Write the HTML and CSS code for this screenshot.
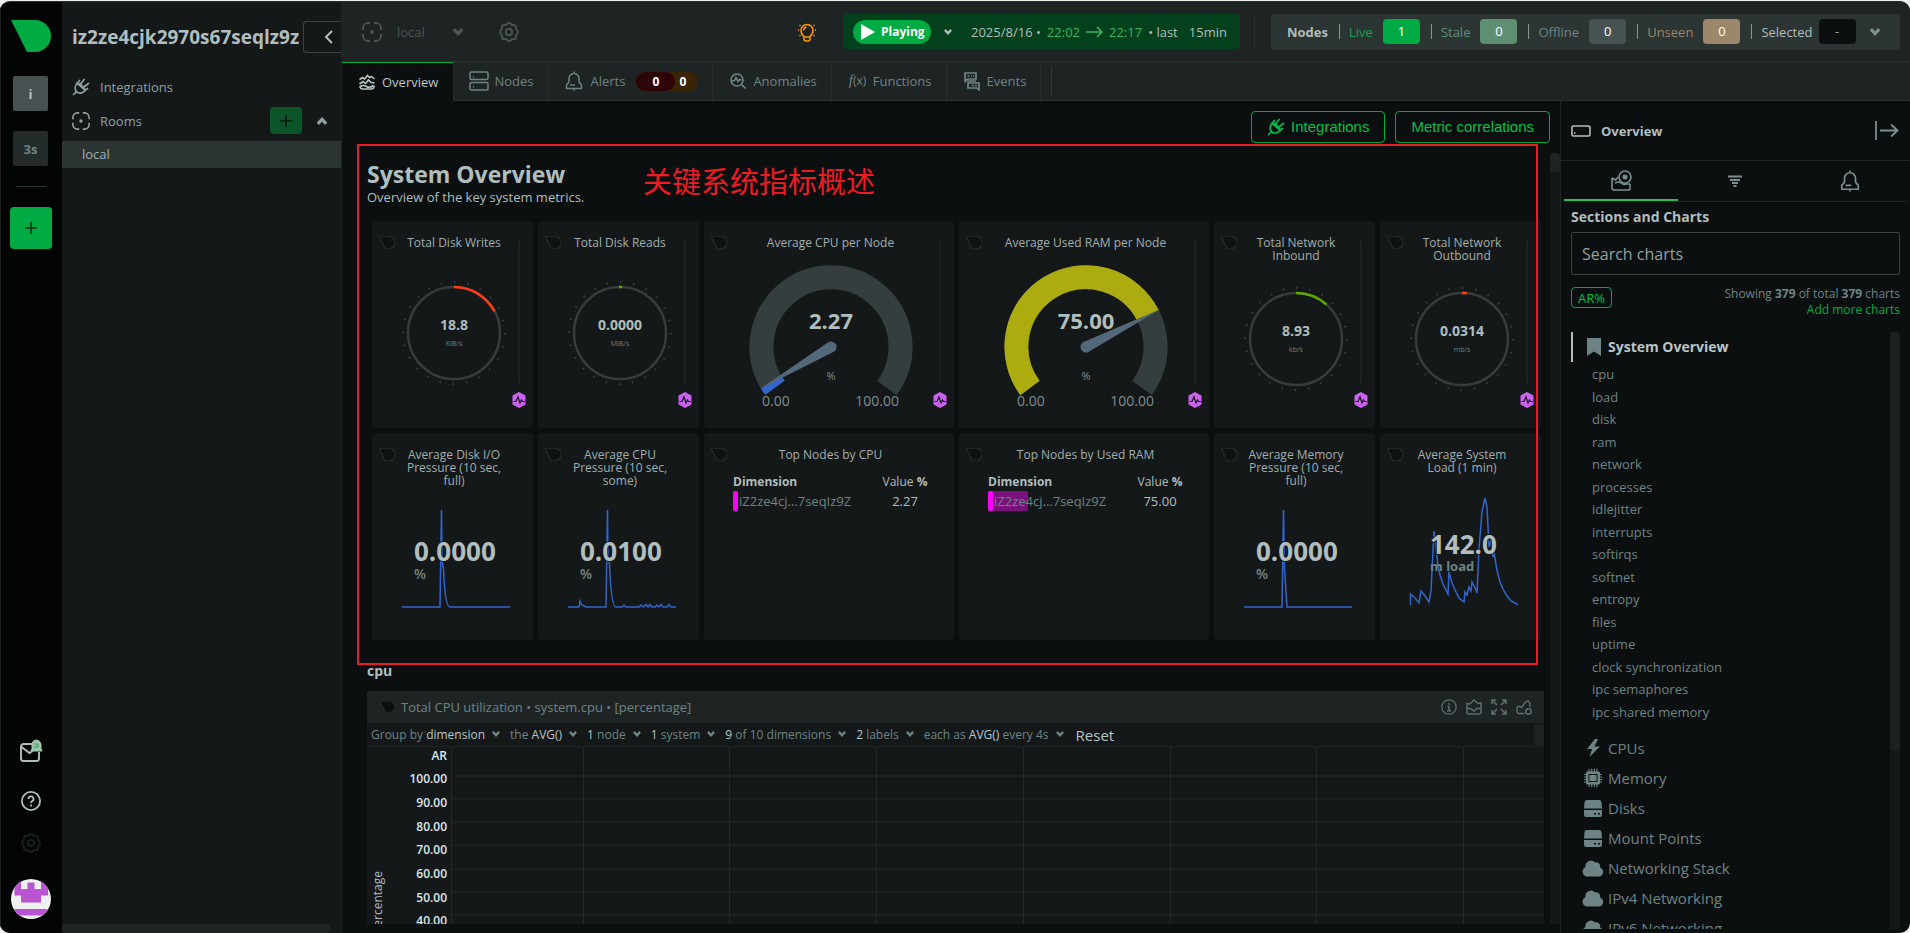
FILE: index.html
```html
<!DOCTYPE html>
<html lang="en">
<head>
<meta charset="utf-8">
<title>Netdata – System Overview</title>
<link rel="stylesheet" href="styles.css">
</head>
<body>
<svg class="sprite" aria-hidden="true">
  <symbol id="logo" viewBox="0 0 40 32"><path d="M0 0H24A16 16 0 0 1 24 32H16Z"/></symbol>
  <symbol id="chev" viewBox="0 0 10 8"><path d="M0 2 2 0 5 3.200 8 0 10 2V2.800L5 8 0 2.800Z"/></symbol>
  <symbol id="room" viewBox="0 0 20 20"><path d="M8 1H6A5 5 0 0 0 1 6v2M12 1h2a5 5 0 0 1 5 5v2M19 12v2a5 5 0 0 1-5 5h-2M8 19H6a5 5 0 0 1-5-5v-2" fill="none" stroke="currentColor" stroke-width="1.800"/><circle cx="10" cy="10" r="1.900"/></symbol>
  <symbol id="gear" viewBox="0 0 20 20"><path d="M10 1c1.600 0 1.900 1.500 3 1.900s2.400-.4 3.500.7.300 2.300.7 3.400S19 8.400 19 10s-1.400 1.900-1.800 3 .4 2.400-.7 3.500-2.400.3-3.500.700S11.600 19 10 19s-1.900-1.400-3-1.800-2.400.4-3.500-.7-.3-2.400-.7-3.500S1 11.600 1 10s1.400-1.900 1.800-3-.4-2.400.7-3.500 2.400-.3 3.500-.700S8.400 1 10 1Z" fill="none" stroke="currentColor" stroke-width="1.800"/><circle cx="10" cy="10" r="3.200" fill="none" stroke="currentColor" stroke-width="1.800"/></symbol>
  <symbol id="plug" viewBox="0 0 18 18"><path d="M1.500 16.500 4.500 13.500M5.500 5C2.500 7.500 2.500 11 4.500 13.500S10.500 15.500 13 12.500M5 5 13.500 12.500M8 5.500 12 10M7.500 2.500 5.500 5M9 5.500l3-4M12.500 8.500 16.500 5.500M13 12l2.500-1.500" fill="none" stroke="currentColor" stroke-width="1.700" stroke-linecap="round"/></symbol>
  <symbol id="bell" viewBox="0 0 18 20"><path d="M9 2.500a5 5 0 0 0-5 5V11L1.500 14v3.500h15V14L14 11V7.500a5 5 0 0 0-5-5ZM9 .500v2M5 14h5M9 17.500v2" fill="none" stroke="currentColor" stroke-width="1.500" stroke-linejoin="round"/></symbol>
  <symbol id="hex" viewBox="0 0 14 16"><path d="M7 0 13.500 3.500v9L7 16 .500 12.500v-9Z" fill="#cb62f0"/><path d="M1.500 9.500H4L6 5l2 6 1.500-3 1 1.500H13" fill="none" stroke="#141819" stroke-width="1.200"/></symbol>
  <symbol id="disk" viewBox="0 0 18 17"><path d="M3 0h12q2 0 2.500 2l.500 6.500H0L.500 2Q1 0 3 0ZM0 10h18v4.500q0 2.500-2 2.500H2q-2 0-2-2.500Zm10 3v1.500h2V13Zm4 0v1.500h2V13Z" fill-rule="evenodd"/></symbol>
  <symbol id="cloud" viewBox="0 0 22 17"><path d="M5 16.500a5 5 0 0 1-1.500-9.500A5.500 5.500 0 0 1 13 2.500a4 4 0 0 1 5 5A4.700 4.700 0 0 1 17.500 16.500Z"/></symbol>
  <symbol id="dial" viewBox="0 0 108 108"><circle cx="54" cy="54" r="51" fill="none" stroke="#3c4646" stroke-width="2" pathLength="240" stroke-dasharray="1 9"/><circle cx="54" cy="54" r="46" fill="none" stroke="#353e3e" stroke-width="2.500"/></symbol>
</svg>

<div class="app">
  <nav class="rail" aria-label="Spaces">
    <svg class="rail-logo"><use href="#logo"/></svg>
    <button class="space space-on">i</button>
    <button class="space">3s</button>
    <hr class="rail-line">
    <button class="add-space" aria-label="Add space"><svg width="12" height="12" viewBox="0 0 12 12"><path d="M6 0v12M0 6h12" stroke="#0a2e17" stroke-width="1.500"/></svg></button>
    <div class="rail-foot">
      <button class="icon-btn" aria-label="News"><svg width="24" height="24" viewBox="0 0 24 24"><path d="M13 5H4.500A2.500 2.500 0 0 0 2 7.500v12A2.500 2.500 0 0 0 4.500 22h13a2.500 2.500 0 0 0 2.500-2.500V13M2.500 8l8 6 3-2" fill="none" stroke="#b0bebe" stroke-width="1.900"/><path d="M17 1a5 5 0 0 1 5 5v3.500l1 2.500H12l1-2.500V6A5 5 0 0 1 17 1Z" fill="#8fcf9c" stroke="#b0bebe"/><path d="M15 5h4v3h-4" fill="none" stroke="#5f8a6c"/></svg></button>
      <button class="icon-btn help" aria-label="Help"><svg width="20" height="20" viewBox="0 0 20 20"><circle cx="10" cy="10" r="9.100" fill="none" stroke="#b0bebe" stroke-width="1.800"/><path d="M7.500 8A2.500 2.500 0 1 1 11 10.200Q10 10.700 10 12M10 13.500v2" fill="none" stroke="#b0bebe" stroke-width="1.800"/></svg></button>
      <button class="icon-btn dim" aria-label="Settings"><svg width="20" height="20"><use href="#gear"/></svg></button>
      <svg class="avatar" viewBox="0 0 40 40" role="img" aria-label="Account"><clipPath id="round"><circle cx="20" cy="20" r="20"/></clipPath><g clip-path="url(#round)"><path d="M0 0h40v40H0Z" fill="#f0f0f0"/><path d="M3.500 0H10v10h6.500V3.500h7V10H30V0h7v16.500h-7v7H10v-7H3.500ZM3.500 30h33v6.500h-33Z" fill="#b955d3"/></g></svg>
    </div>
  </nav>

  <aside class="side">
    <div class="side-head">
      <h2 class="side-title">iz2ze4cjk2970s67seqlz9z</h2>
      <button class="collapse" aria-label="Collapse"><svg width="9" height="14" viewBox="0 0 9 14"><path d="M8 1 2 7l6 6" fill="none" stroke="currentColor" stroke-width="2"/></svg></button>
    </div>
    <a class="side-row" href="#"><svg width="18" height="18"><use href="#plug"/></svg>Integrations</a>
    <div class="side-row rooms"><svg width="18" height="18"><use href="#room"/></svg><span>Rooms</span>
      <button class="add-room" aria-label="Add room"><svg width="12" height="12" viewBox="0 0 12 12"><path d="M6 0v12M0 6h12" stroke="#08170e" stroke-width="1.500"/></svg></button>
      <button class="icon-btn fold" aria-label="Fold"><svg width="10" height="8"><use href="#chev"/></svg></button>
    </div>
    <a class="side-room" href="#">local</a>
    <div class="side-thumb"></div>
  </aside>

  <div class="work">
    <header class="top">
      <div class="crumbs">
        <svg width="20" height="20"><use href="#room"/></svg><span class="crumb-name">local</span>
        <svg width="10" height="8"><use href="#chev"/></svg>
        <svg class="crumb-gear" width="20" height="20"><use href="#gear"/></svg>
      </div>
      <svg class="bulb" viewBox="0 0 20 20"><path d="M7 14.500C4.500 12.500 4 11 4 8.500a6 6 0 0 1 12 0c0 2.500-.5 4-3 6v2.500q0 2-2 2H9q-2 0-2-2ZM7.500 15h5M6.500 8.500q.5-3 3-3.500M1 8h1M18 8h1M2.500 3l1 .8M17.500 3l-1 .8M2.500 14l1-.8M17.500 14l-1-.8" fill="none" stroke="#f90" stroke-width="1.500"/></svg>
      <div class="player">
        <button class="playing"><svg width="14" height="16" viewBox="0 0 14 16"><path d="M0 0 14 8 0 16Z" fill="#fff"/></svg>Playing</button>
        <svg class="play-chev" width="8" height="6"><use href="#chev"/></svg>
        <button class="range">2025/8/16 • <em>22:02</em> <svg width="17" height="12" viewBox="0 0 17 12"><path d="M0 6h16M11 1l5 5-5 5" fill="none" stroke="#37b45f" stroke-width="1.500"/></svg> <em>22:17</em> • last <span class="span-len">15min</span></button>
      </div>
      <div class="top-line"></div>
      <div class="nodes-bar">
        <b>Nodes</b>
        <span class="stat live">Live <i>1</i></span>
        <span class="stat stale">Stale <i>0</i></span>
        <span class="stat offline">Offline <i>0</i></span>
        <span class="stat unseen">Unseen <i>0</i></span>
        <span class="stat selected">Selected <i>-</i></span>
        <svg class="nodes-chev" width="10" height="8"><use href="#chev"/></svg>
      </div>
    </header>

    <nav class="tabs">
      <a class="tab tab-on" href="#"><svg width="16" height="16" viewBox="0 0 16 16"><path d="M.500 5.500 3.500 3.500 5.500 5 8.500 1.500 10.500 3.500 12.500 2.500 15.500 5M.500 10 4 7.500 6.500 9.500 9.500 6 12 8.500 15.500 9M1 12q0 3 2.500 3h9q2.500 0 2.500-3.500M1.500 12.500q3-2 6 0t7-1" fill="none" stroke="currentColor" stroke-width="1.600"/></svg>Overview</a>
      <a class="tab tab-nodes" href="#"><svg width="20" height="20" viewBox="0 0 20 20"><path d="M2.500 1h15q1.500 0 1.500 1.500V7q0 1.500-1.500 1.500h-15Q1 8.500 1 7V2.500Q1 1 2.500 1ZM2.500 11.500h15q1.500 0 1.500 1.500v4.500q0 1.500-1.500 1.500h-15Q1 19 1 17.500V13q0-1.500 1.500-1.500ZM4 6h1M4 16h1" fill="none" stroke="currentColor" stroke-width="1.500"/></svg>Nodes</a>
      <a class="tab" href="#"><svg width="18" height="20"><use href="#bell"/></svg>Alerts<span class="alerts"><b class="crit">0</b><b class="warn">0</b></span></a>
      <a class="tab" href="#"><svg width="16" height="16" viewBox="0 0 16 16"><circle cx="7" cy="7" r="6" fill="none" stroke="currentColor" stroke-width="1.600"/><path d="M11.500 11.500 15.500 15.500M2 8l2.500-.5L6 4.500l2 4 1.500-2L11.500 7" fill="none" stroke="currentColor" stroke-width="1.600"/></svg>Anomalies</a>
      <a class="tab" href="#"><span class="fx"><i>f</i>(x)</span>Functions</a>
      <a class="tab" href="#"><svg width="16" height="19" viewBox="0 0 16 19"><path d="M1 1h11v6H3.500L1 9.500ZM4 11h11v7l-2-2H4Z" fill="none" stroke="currentColor" stroke-width="1.700"/><path d="M3.500 4h2M7 4h1M9 4h1M8 13.500h2M11 13.500h2M3 9h9" stroke="currentColor" stroke-width="1.700"/></svg>Events</a>
      <span class="tabs-line"></span>
    </nav>

    <div class="body">
      <main class="main">
        <div class="actions">
          <button class="outline"><svg width="18" height="18"><use href="#plug"/></svg>Integrations</button>
          <button class="outline">Metric correlations</button>
        </div>
        <div class="scroll">
          <div class="content">
            <h1 class="title">System Overview</h1>
            <p class="subtitle">Overview of the key system metrics.</p>

            <section class="cards">
              <article class="card">
                <svg class="mark"><use href="#logo"/></svg>
                <div class="card-mid"><h3>Total Disk Writes</h3>
                  <svg class="dial" viewBox="0 0 108 108"><use href="#dial"/><path d="M54 8A46 46 0 0 1 94.600 32.400" stroke="#ff3c14" class="arc"/><text x="54" y="51" class="dial-val">18.8</text><text x="54" y="67" class="dial-unit">KiB/s</text></svg></div>
                <div class="card-side"><span></span><svg><use href="#hex"/></svg></div>
              </article>
              <article class="card">
                <svg class="mark"><use href="#logo"/></svg>
                <div class="card-mid"><h3>Total Disk Reads</h3>
                  <svg class="dial" viewBox="0 0 108 108"><use href="#dial"/><path d="M53 8h3" stroke="#5fa800" class="arc"/><text x="54" y="51" class="dial-val">0.0000</text><text x="54" y="67" class="dial-unit">MiB/s</text></svg></div>
                <div class="card-side"><span></span><svg><use href="#hex"/></svg></div>
              </article>
              <article class="card">
                <svg class="mark"><use href="#logo"/></svg>
                <div class="card-mid"><h3>Average CPU per Node</h3>
                  <svg class="gauge" viewBox="0 0 170 150"><path d="M29 123A69.500 69.500 0 1 1 141 123" class="gauge-track"/><path d="M28.800 122.800A69.500 69.500 0 0 1 25.300 117.500" stroke="#3366cc" class="gauge-val"/><path d="M82.200 77.200 13 124.500 87.800 86.800A5.500 5.500 0 0 0 82.200 77.200Z" class="needle"/><text x="85" y="64" class="gauge-num">2.27</text><text x="85" y="115" class="gauge-unit">%</text><text x="16" y="141" class="gauge-min">0.00</text><text x="153" y="141" class="gauge-max">100.00</text></svg></div>
                <div class="card-side"><span></span><svg><use href="#hex"/></svg></div>
              </article>
              <article class="card">
                <svg class="mark"><use href="#logo"/></svg>
                <div class="card-mid"><h3>Average Used RAM per Node</h3>
                  <svg class="gauge" viewBox="0 0 170 150"><path d="M29 123A69.500 69.500 0 1 1 141 123" class="gauge-track"/><path d="M29 123A69.500 69.500 0 1 1 147 50.500" stroke="#acac10" class="gauge-val"/><path d="M82.500 77.100 159 44.300 87.500 86.900A5.500 5.500 0 0 1 82.500 77.100Z" class="needle"/><text x="85" y="64" class="gauge-num">75.00</text><text x="85" y="115" class="gauge-unit">%</text><text x="16" y="141" class="gauge-min">0.00</text><text x="153" y="141" class="gauge-max">100.00</text></svg></div>
                <div class="card-side"><span></span><svg><use href="#hex"/></svg></div>
              </article>
              <article class="card">
                <svg class="mark"><use href="#logo"/></svg>
                <div class="card-mid"><h3>Total Network<br>Inbound</h3>
                  <svg class="dial dial-low" viewBox="0 0 108 108"><use href="#dial"/><path d="M54 8A46 46 0 0 1 84.500 19.500" stroke="#5fa800" class="arc"/><text x="54" y="51" class="dial-val">8.93</text><text x="54" y="67" class="dial-unit">kb/s</text></svg></div>
                <div class="card-side"><span></span><svg><use href="#hex"/></svg></div>
              </article>
              <article class="card">
                <svg class="mark"><use href="#logo"/></svg>
                <div class="card-mid"><h3>Total Network<br>Outbound</h3>
                  <svg class="dial dial-low" viewBox="0 0 108 108"><use href="#dial"/><path d="M54 8h5" stroke="#ff3c14" class="arc"/><text x="54" y="51" class="dial-val">0.0314</text><text x="54" y="67" class="dial-unit">mb/s</text></svg></div>
                <div class="card-side"><span></span><svg><use href="#hex"/></svg></div>
              </article>

              <article class="card">
                <svg class="mark"><use href="#logo"/></svg>
                <div class="card-mid"><h3>Average Disk I/O<br>Pressure (10 sec,<br>full)</h3>
                  <svg class="spark" viewBox="0 0 108 110"><path d="M0 98H38L39.500 1 40 52 41.500 60Q43 98 48 98H108"/><text x="12" y="52" class="big">0.0000</text><text x="12" y="70" class="big-unit">%</text></svg></div>
              </article>
              <article class="card">
                <svg class="mark"><use href="#logo"/></svg>
                <div class="card-mid"><h3>Average CPU<br>Pressure (10 sec,<br>some)</h3>
                  <svg class="spark" viewBox="0 0 108 110"><path d="M0 98H11L12 92 14 96 18 98H38L39.500 1 40 50 41.500 54Q43 98 48 98H54L56 96 58 98H71L73 96 75 98 78 95.500 80 98 82 95.500 84 98H87L89 96 91 98 93 95.500 95 98H99L101 95.500 103 98H108"/><text x="12" y="52" class="big">0.0100</text><text x="12" y="70" class="big-unit">%</text></svg></div>
              </article>
              <article class="card">
                <svg class="mark"><use href="#logo"/></svg>
                <div class="card-mid"><h3>Top Nodes by CPU</h3>
                  <table class="top-nodes"><thead><tr><th>Dimension</th><th>Value <b>%</b></th></tr></thead><tbody><tr><td class="node-cell"><span class="node-bar"></span><span class="node-name">iZ2ze4cj...7seqIz9Z</span></td><td>2.27</td></tr></tbody></table></div>
              </article>
              <article class="card">
                <svg class="mark"><use href="#logo"/></svg>
                <div class="card-mid"><h3>Top Nodes by Used RAM</h3>
                  <table class="top-nodes"><thead><tr><th>Dimension</th><th>Value <b>%</b></th></tr></thead><tbody><tr><td class="node-cell"><span class="node-fill" style="width:40px"></span><span class="node-bar"></span><span class="node-name">iZ2ze4cj...7seqIz9Z</span></td><td>75.00</td></tr></tbody></table></div>
              </article>
              <article class="card">
                <svg class="mark"><use href="#logo"/></svg>
                <div class="card-mid"><h3>Average Memory<br>Pressure (10 sec,<br>full)</h3>
                  <svg class="spark" viewBox="0 0 108 110"><path d="M0 98H38L39.500 1 40.500 60 43 98H108"/><text x="12" y="52" class="big">0.0000</text><text x="12" y="70" class="big-unit">%</text></svg></div>
              </article>
              <article class="card">
                <svg class="mark"><use href="#logo"/></svg>
                <div class="card-mid"><h3>Average System<br>Load (1 min)</h3>
                  <svg class="spark spark-tall" viewBox="0 0 108 110"><path d="M.500 108V97L5 101 9 106 11 94 15 99 19 105 21 94 24 34 28 69 30 78 33 87 38 97 39 75 42 86 46 95 49 101 54 105 55 95 57 98 59 90 61 94 62 85 65 91 67 96 69 52 72 15 75 1 77 10 79 50 81 44 83 60 84 56 87 73 90 85 93 92 97 99 101 104 105 106 108 108"/><text x="20" y="57" class="big">142.0</text><text x="20" y="74" class="big-unit strong">m load</text></svg></div>
              </article>
            </section>

            <h2 class="group">cpu</h2>
            <section class="chart">
              <header class="chart-head">
                <svg class="mark-sm"><use href="#logo"/></svg><h3>Total CPU utilization • system.cpu • [percentage]</h3>
                <div class="chart-tools">
                  <button class="icon-btn" aria-label="Info"><svg width="16" height="16" viewBox="0 0 16 16"><circle cx="8" cy="8" r="7.200" fill="none" stroke="currentColor" stroke-width="1.300"/><path d="M8 4v1.800M6.500 7.500H8v4M6 11.700h4" fill="none" stroke="currentColor" stroke-width="1.500"/></svg></button>
                  <button class="icon-btn" aria-label="Chart type"><svg width="16" height="16" viewBox="0 0 16 16"><path d="M1 4.500 4 5l4-4 4 3.500 3-.5v9q0 2-2 2H3q-2 0-2-2ZM1 9l4 1 3 2 3-2.500h4" fill="none" stroke="currentColor" stroke-width="1.500"/></svg></button>
                  <button class="icon-btn" aria-label="Full screen"><svg width="16" height="16" viewBox="0 0 16 16"><path d="M1 5V1h4M11 1h4v4M15 11v4h-4M5 15H1v-4M1 1l5 5M15 1l-5 5M15 15l-5-5M1 15l5-5" fill="none" stroke="currentColor" stroke-width="1.600"/></svg></button>
                  <button class="icon-btn" aria-label="Add to dashboard"><svg width="16" height="16" viewBox="0 0 16 16"><path d="M8.500 14.500H3Q1 14.500 1 12V9q0-1.500 2-1.500 1.500 0 2.500 1L9.500 3 12 1.800 14 4.500V8" fill="none" stroke="currentColor" stroke-width="1.400"/><circle cx="12.500" cy="12.500" r="2.700" fill="none" stroke="currentColor" stroke-width="1.500"/></svg></button>
                </div>
              </header>
              <div class="filters">
                <button>Group by <b>dimension</b><svg><use href="#chev"/></svg></button>
                <button>the <b>AVG()</b><svg><use href="#chev"/></svg></button>
                <button><b>1</b> node<svg><use href="#chev"/></svg></button>
                <button><b>1</b> system<svg><use href="#chev"/></svg></button>
                <button><b>9</b> of 10 dimensions<svg><use href="#chev"/></svg></button>
                <button><b>2</b> labels<svg><use href="#chev"/></svg></button>
                <button>each as <b>AVG()</b> every 4s<svg><use href="#chev"/></svg></button>
                <button class="reset">Reset</button>
                <span class="filters-thumb"></span>
              </div>
              <div class="plot">
                <div class="unit">percentage</div>
                <div class="axis"><span>AR</span><span>100.00</span><span>90.00</span><span>80.00</span><span>70.00</span><span>60.00</span><span>50.00</span><span>40.00</span></div>
                <div class="plot-area">
                  <div class="h-lines"><i></i><i></i><i></i><i></i><i></i><i></i><i></i><i></i></div>
                  <div class="v-lines"><i></i><i></i><i></i><i></i><i></i><i></i><i></i><i></i></div>
                </div>
              </div>
            </section>
          </div>
          <div class="scrollbar"><div class="main-thumb"></div></div>
        </div>
        <div class="note"><p>关键系统指标概述</p></div>
      </main>

      <aside class="info">
        <div class="info-head"><svg width="20" height="12" viewBox="0 0 20 12"><rect x="1" y="1" width="18" height="10" rx="1.500" fill="none" stroke="currentColor" stroke-width="1.600"/><path d="M3 8h1.500" stroke="currentColor" stroke-width="1.500"/></svg><b>Overview</b>
          <button class="icon-btn hide" aria-label="Hide panel"><svg width="24" height="19" viewBox="0 0 24 19"><path d="M1 0v19M5 9.500h17M16 3.500l6.500 6-6.500 6" fill="none" stroke="currentColor" stroke-width="1.800"/></svg></button></div>
        <div class="info-tabs">
          <button class="on" aria-label="Charts"><svg width="21" height="21" viewBox="0 0 21 21"><path d="M1 8v10q0 2 2 2h14q2 0 2-2v-4M1 8l3.500 2L7 7M4 13q4-2 6 0t6 1h3" fill="none" stroke="currentColor" stroke-width="1.600"/><circle cx="14" cy="7" r="6" fill="none" stroke="currentColor" stroke-width="1.600"/><circle cx="14" cy="7" r="2.500"/></svg></button>
          <button aria-label="Filters"><svg width="16" height="12" viewBox="0 0 16 12"><path d="M1 1.500h14M3 5h10M5 8h6M6.500 11h3" stroke="currentColor" stroke-width="2.200"/></svg></button>
          <button aria-label="Alerts"><svg width="20" height="22"><use href="#bell"/></svg></button>
        </div>
        <h2 class="info-title"><label for="search">Sections and Charts</label></h2>
        <input id="search" class="search" type="text" placeholder="Search charts">
        <div class="info-meta"><button class="ar">AR%</button><div>Showing <b>379</b> of total <b>379</b> charts<br><a href="#">Add more charts</a></div></div>
        <div class="menu">
          <div class="menu-list">
            <a class="menu-cur" href="#"><svg width="14" height="18" viewBox="0 0 14 18"><path d="M0 0h14v18l-7-4.500L0 18Z"/></svg>System Overview</a>
            <div class="subs"><a href="#">cpu</a><a href="#">load</a><a href="#">disk</a><a href="#">ram</a><a href="#">network</a><a href="#">processes</a><a href="#">idlejitter</a><a href="#">interrupts</a><a href="#">softirqs</a><a href="#">softnet</a><a href="#">entropy</a><a href="#">files</a><a href="#">uptime</a><a href="#">clock synchronization</a><a href="#">ipc semaphores</a><a href="#">ipc shared memory</a></div>
            <a class="sec" href="#"><svg width="22" height="18" viewBox="0 0 22 18"><path d="M13 0 5 10h5L7.500 18 18 7.500h-5.500L16 0Z"/></svg>CPUs</a>
            <a class="sec" href="#"><svg width="22" height="18" viewBox="0 0 22 18"><path d="M5.500 2.500h11q1.500 0 1.500 1.500v10q0 1.500-1.500 1.500h-11Q4 15.500 4 14V4q0-1.500 1.500-1.500ZM6.500 5v8h9V5Z" fill-rule="evenodd"/><path d="M8 6.500h6v5H8ZM7 0v3M9.700 0v3M12.300 0v3M15 0v3M7 15v3M9.700 15v3M12.300 15v3M15 15v3M2 5.500h2M2 8h2M2 10.500h2M2 13h2M18 5.500h2M18 8h2M18 10.500h2M18 13h2" stroke="currentColor" stroke-width="1.200"/></svg>Memory</a>
            <a class="sec" href="#"><svg width="22" height="17"><use href="#disk"/></svg>Disks</a>
            <a class="sec" href="#"><svg width="22" height="17"><use href="#disk"/></svg>Mount Points</a>
            <a class="sec" href="#"><svg width="22" height="17"><use href="#cloud"/></svg>Networking Stack</a>
            <a class="sec" href="#"><svg width="22" height="17"><use href="#cloud"/></svg>IPv4 Networking</a>
            <a class="sec" href="#"><svg width="22" height="17"><use href="#cloud"/></svg>IPv6 Networking</a>
          </div>
          <div class="scrollbar"><div class="menu-thumb"></div></div>
        </div>
      </aside>
    </div>
  </div>
</div>
</body>
</html>
```

FILE: styles.css
```css
* { box-sizing: border-box; }
body {
  margin: 0;
  background: #eef0f0;
  font: 13px/18px "Open Sans", "Noto Sans", "Noto Sans CJK SC", sans-serif;
  color: #b0bebe;
}
h1, h2, h3, p { margin: 0; }
button { font: inherit; color: inherit; background: none; border: 0; padding: 0; }
a { color: inherit; text-decoration: none; }
svg { fill: currentColor; flex: none; }
em, i { font-style: normal; }
.sprite { position: absolute; width: 0; height: 0; }
.icon-btn { display: flex; }

.app {
  display: grid;
  grid-template-columns: 62px 280px minmax(0, 1fr);
  height: calc(100vh - 1px);
  margin-top: 1px;
  border-radius: 10px;
  overflow: hidden;
  background: #0b0f10;
  border-top: 1px solid #2a3030;
}

/* Spaces rail */
.rail {
  display: flex;
  flex-direction: column;
  align-items: center;
  background: #030504;
  border-left: 1px solid #1a1f1f;
  padding: 18px 2px 14px 0;
}
.rail-logo { width: 40px; height: 32px; color: #00ab44; margin-bottom: 24px; }
.space {
  width: 35px;
  height: 35px;
  border-radius: 2px;
  background: #242b2b;
  color: #6e8484;
  font-weight: 700;
  margin-bottom: 20px;
}
.space-on { background: #475151; color: #b9c6c6; }
.rail-line { width: 30px; height: 1px; border: 0; background: #2c3333; margin: 0 0 20px; }
.add-space {
  display: flex;
  align-items: center;
  justify-content: center;
  width: 42px;
  height: 42px;
  border-radius: 4px;
  background: #00ab44;
}
.rail-foot { display: flex; flex-direction: column; align-items: center; margin-top: auto; }
.help { margin: 28px 0 22px; }
.dim { color: #1c2121; }
.avatar { width: 40px; height: 40px; margin-top: 26px; }

/* Rooms sidebar */
.side {
  display: flex;
  flex-direction: column;
  background: #141819;
  border-right: 1px solid #1f2525;
}
.side-head { display: flex; align-items: center; padding-left: 10px; margin-top: 19px; }
.side-title { flex: 1; min-width: 0; font-size: 19px; line-height: 32px; white-space: nowrap; overflow: hidden; }
.collapse {
  display: flex;
  align-items: center;
  justify-content: center;
  width: 38px;
  height: 32px;
  padding-left: 12px;
  border: 1px solid #3a4343;
  border-right: 0;
  border-radius: 4px 0 0 4px;
}
.side-row { display: flex; align-items: center; gap: 10px; height: 34px; padding: 0 14px 0 10px; margin-top: 17px; color: #8fa1a1; }
.rooms { margin-top: 0; height: 33px; }
.add-room {
  display: flex;
  align-items: center;
  justify-content: center;
  width: 32px;
  height: 27px;
  margin-left: auto;
  border-radius: 4px;
  background: #0c5429;
}
.fold { margin-left: 5px; transform: rotate(180deg); }
.side-room { margin-top: 4px; padding-left: 20px; line-height: 27px; background: #2d3434; color: #9fb0b0; }
.side-thumb { margin-top: auto; width: 268px; height: 9px; border-radius: 4px; background: #1e2424; }

/* Top bar */
.work { display: flex; flex-direction: column; min-width: 0; min-height: 0; }
.top {
  display: flex;
  align-items: center;
  height: 60px;
  padding: 0 10px 0 20px;
  background: #1e2323;
  border-bottom: 1px solid #282f2f;
}
.crumbs { display: flex; align-items: center; flex: 1; color: #4c5656; }
.crumb-name { width: 41px; margin: 0 15px; }
.crumb-gear { margin-left: 36px; }
.bulb { width: 20px; height: 20px; margin-right: 26px; }
.player {
  display: flex;
  align-items: center;
  width: 397px;
  height: 35px;
  padding-left: 10px;
  border-radius: 4px;
  background: #03411c;
}
.playing {
  display: flex;
  align-items: center;
  gap: 6px;
  width: 78px;
  height: 24px;
  padding-left: 8px;
  border-radius: 12px;
  background: #00ab44;
  color: #fff;
  font-weight: 700;
  font-size: 12px;
}
.play-chev { margin: 0 19px 0 13px; }
.range { display: flex; gap: 6px; align-items: center; white-space: nowrap; }
.range em { color: #37b45f; }
.span-len { margin-left: 5px; }
.top-line { width: 1px; height: 35px; margin: 0 16px 0 14px; background: #2a3131; }
.nodes-bar {
  display: flex;
  align-items: center;
  width: 629px;
  height: 36px;
  padding: 0 20px 0 16px;
  border-radius: 2px;
  background: #2d3434;
}
.stat { display: flex; align-items: center; justify-content: space-between; gap: 10px; margin-left: 11px; padding-left: 10px; position: relative; }
.stat::before { content: ""; position: absolute; left: 0; top: 5px; width: 1px; height: 15px; background: #869696; }
.stat i { width: 37px; line-height: 25px; border-radius: 4px; text-align: center; color: #fff; }
.live { color: #10a548; }
.live i { background: #00ab44; }
.stale { color: #5f8f73; }
.stale i { background: #5f8f73; }
.offline { color: #6e8484; }
.offline i { background: #475252; }
.unseen { color: #9b8769; }
.unseen i { background: #9b8769; }
.selected { gap: 6px; }
.selected i { background: #0b0f10; color: #8fa1a1; }
.nodes-chev { margin-left: auto; color: #7c8f8f; }

/* Tabs */
.tabs { display: flex; height: 39px; background: #1e2323; color: #6e8484; }
.tab {
  display: flex;
  align-items: center;
  gap: 7px;
  padding: 0 14px 0 17px;
  border-right: 1px solid #282f2f;
  border-bottom: 1px solid #282f2f;
}
.tab-on { padding-right: 15px; background: #0b0f10; color: #b9c6c6; border-top: 1px solid #00ab44; border-bottom-color: #0b0f10; }
.tab-nodes { padding-left: 15px; gap: 5px; }
.alerts { display: flex; width: 62px; height: 19px; margin-left: 4px; border-radius: 10px; overflow: hidden; background: #3b2403; color: #fff; line-height: 19px; }
.alerts b { font-size: 12px; text-align: center; }
.crit { width: 39px; border-radius: 0 10px 10px 0; background: #2d0509; }
.warn { width: 15px; }
.fx { font-size: 12px; width: 17px; display: flex; }
.fx i { font: italic 15px/16px "Liberation Serif", serif; }
.tabs-line { flex: 1; border-bottom: 1px solid #282f2f; padding: 4px 10px; }
.tabs-line::before { content: ""; display: block; width: 1px; height: 30px; background: #2f3737; }

/* Main column */
.body { display: grid; grid-template-columns: minmax(0, 1fr) 350px; flex: 1; min-height: 0; }
.main { position: relative; display: flex; flex-direction: column; min-height: 0; padding-bottom: 9px; }
.actions { display: flex; justify-content: flex-end; gap: 10px; padding: 10px; }
.outline {
  display: flex;
  align-items: center;
  gap: 6px;
  height: 32px;
  padding: 0 15px;
  border: 1px solid #00ab44;
  border-radius: 4px;
  color: #00c04d;
  font: 15px/20px "Liberation Sans", Arial, sans-serif;
}
.scroll { display: flex; flex: 1; min-height: 0; overflow: hidden; }
.content { flex: 1; min-width: 0; padding: 7px 6px 0 25px; }
.scrollbar { width: 10px; background: #141819; border-radius: 4px 4px 0 0; }
.main-thumb { height: 19px; border-radius: 4px; background: #1e2424; }
.title { font-size: 23px; line-height: 28px; }
.subtitle { line-height: 18px; }
.cards {
  display: grid;
  grid-template-columns: 161fr 161fr 250fr 250fr 161fr 161fr;
  grid-auto-rows: 207px;
  gap: 5px;
  margin: 15px 3px 0 5px;
}
.card { display: grid; grid-template-columns: 18px minmax(0, 1fr) 16px; padding: 15px 6px 0 7px; border-radius: 4px; background: #141819; }
.mark { width: 16px; height: 13px; color: #0e1213; stroke: #252c2c; stroke-width: 3px; overflow: visible; }
.card-mid { display: flex; flex-direction: column; align-items: center; }
.card-mid h3 { font-size: 12px; line-height: 13px; font-weight: 400; text-align: center; white-space: nowrap; color: #a0afaf; }
.card-side { display: flex; flex-direction: column; align-items: center; }
.card-side span { width: 2px; height: 142px; margin-top: 5px; background: #1e2424; }
.card-side svg { width: 14px; height: 16px; margin-top: 9px; }
.dial { width: 108px; height: 108px; margin-top: 30px; }
.dial-low { margin-top: 23px; }
.arc { fill: none; stroke-width: 2.500px; }
.dial-val { font-size: 14px; font-weight: 700; text-anchor: middle; }
.dial-unit { font-size: 7px; text-anchor: middle; fill: #6e8484; }
.gauge { width: 170px; height: 150px; margin-top: 16px; overflow: visible; }
.gauge-track { fill: none; stroke: #353e3e; stroke-width: 24px; }
.gauge-val { fill: none; stroke-width: 24px; }
.needle { fill: #536878; }
.gauge-num { font-size: 22px; font-weight: 700; text-anchor: middle; }
.gauge-unit { font-size: 11px; text-anchor: middle; fill: #7c8f8f; }
.gauge-min, .gauge-max { font-size: 14px; fill: #7c8f8f; }
.gauge-max { text-anchor: end; }
.spark { width: 108px; height: 110px; overflow: visible; margin: 22px 0 0 4px; }
.spark path { fill: none; stroke: #3366cc; stroke-width: 1.500px; }
.spark-tall { margin-top: 23px; }
.big { font-size: 26px; font-weight: 700; stroke: #141819; stroke-width: 2px; paint-order: stroke; }
.big-unit { font-size: 14px; font-weight: 600; fill: #6e8484; }
.big-unit.strong { font-size: 13px; font-weight: 700; }
.top-nodes { width: 195px; border-collapse: collapse; margin-top: 12px; font-size: 13px; line-height: 18px; }
.top-nodes th, .top-nodes td { padding: 0; text-align: center; font-weight: 400; width: 46px; white-space: nowrap; }
.top-nodes th:first-child { width: auto; text-align: left; font-size: 12px; font-weight: 700; }
.top-nodes th:last-child { font-size: 12px; }
.node-cell { position: relative; height: 20px; }
.top-nodes .node-cell { text-align: left; width: auto; }
.node-bar, .node-fill { position: absolute; left: 0; top: 0; width: 5px; height: 20px; border-radius: 2px; background: #f0f; }
.node-fill { background: #7a127c; }
.node-name { position: relative; padding-left: 6px; color: #6e8484; }

/* Chart */
.group { font-size: 14px; line-height: 20px; margin: 21px 0 10px; }
.chart { background: #141819; }
.chart-head { display: flex; align-items: center; height: 32px; padding: 0 12px 0 13px; background: #1e2424; border-radius: 2px 2px 0 0; color: #6e8484; }
.chart-head h3 { font-size: 13px; font-weight: 400; margin-left: 6px; }
.mark-sm { width: 15px; height: 12px; color: #0b0f10; stroke: #252c2c; stroke-width: 3px; overflow: visible; }
.chart-tools { display: flex; gap: 9px; margin-left: auto; color: #5c6e6e; }
.filters { display: flex; align-items: center; gap: 10px; height: 23px; padding-left: 4px; font-size: 12px; color: #6e8484; white-space: nowrap; }
.filters b { font-weight: 400; color: #b9c6c6; }
.filters svg { width: 8px; height: 6px; margin: 0 0 2px 7px; }
.filters .reset { font-size: 15px; color: #b9c6c6; margin-left: 2px; }
.filters-thumb { width: 10px; height: 22px; margin-left: auto; border-radius: 4px; background: #1e2424; }
.plot { display: flex; height: 187px; border-top: 1px solid #1e2424; }
.unit { width: 22px; height: 70px; margin-top: 124px; font-size: 12px; line-height: 22px; writing-mode: vertical-rl; transform: rotate(180deg); text-align: right; }
.axis { display: grid; grid-template-rows: repeat(8, 1fr); align-items: center; width: 58px; margin-top: -3px; text-align: right; font-size: 12px; font-weight: 600; color: #dfe6e6; }
.plot-area { flex: 1; display: grid; margin-left: 4px; border-left: 1px solid #222828; }
.h-lines, .v-lines { grid-area: 1 / 1; display: grid; }
.h-lines { grid-template-rows: 30px repeat(7, 23fr) 0px; margin-bottom: -6px; }
.h-lines i { border-bottom: 2px solid #1b2020; }
.v-lines { grid-template-columns: 132fr repeat(6, 147fr) 80fr; }
.v-lines i { border-right: 1px solid #222828; }
.v-lines i:last-child { border: 0; }

/* Annotation over the overview block */
.note {
  position: absolute;
  left: 15px;
  right: 22px;
  top: 43px;
  height: 521px;
  border: 2px solid #ed1c24;
  pointer-events: none;
}
.note p { margin: 14px 0 0 284px; color: #ed1c24; font: 29px/40px "Noto Sans CJK SC", sans-serif; }

/* Right panel */
.info { display: flex; flex-direction: column; min-height: 0; padding: 0 10px 4px 10px; border-left: 1px solid #1f2525; }
.info-head { display: flex; align-items: center; gap: 10px; height: 60px; margin: 0 -10px; padding: 0 11px 0 10px; border-bottom: 1px solid #1f2525; }
.hide { margin-left: auto; color: #7c8f8f; }
.info-tabs { display: grid; grid-template-columns: repeat(3, 1fr); height: 41px; margin: 0 -7px; border-bottom: 1px solid #1f2525; color: #7c8f8f; }
.info-tabs button { display: flex; align-items: center; justify-content: center; }
.info-tabs .on { border-bottom: 2px solid #37b45f; }
.info-title { font-size: 14px; line-height: 30px; }
.search {
  width: 100%;
  height: 43px;
  padding: 0 10px;
  border: 1px solid #3a4343;
  border-radius: 2px;
  background: #0b0f10;
  color: #b0bebe;
  font: 16px/20px "Open Sans", sans-serif;
}
.search::placeholder { color: #8fa1a1; opacity: 1; }
.info-meta { display: flex; justify-content: space-between; align-items: flex-start; padding-top: 11px; font-size: 12px; line-height: 16px; color: #6e8484; text-align: right; }
.info-meta a { color: #00ab44; }
.ar { width: 41px; height: 21px; margin-top: 1px; border: 1px solid #00ab44; border-radius: 4px; color: #00c04d; font-size: 13px; line-height: 18px; }
.menu { display: flex; flex: 1; min-height: 0; margin-top: 14px; overflow: hidden; color: #6e8484; }
.menu-list { flex: 1; }
.menu-cur { display: flex; align-items: center; gap: 7px; height: 30px; padding-left: 14px; border-left: 2px solid #b0bebe; color: #b9c6c6; font-size: 14px; font-weight: 700; }
.menu-cur svg { color: #6e8484; }
.subs { display: grid; grid-template-rows: repeat(16, 1fr); height: 360px; align-items: center; padding-left: 21px; margin: 1px 0 10px; font-size: 13px; }
.sec { display: flex; align-items: center; gap: 4px; height: 30px; padding-left: 11px; font-size: 15px; }
.menu-thumb { height: 419px; border-radius: 4px; background: #1b2020; }
```
